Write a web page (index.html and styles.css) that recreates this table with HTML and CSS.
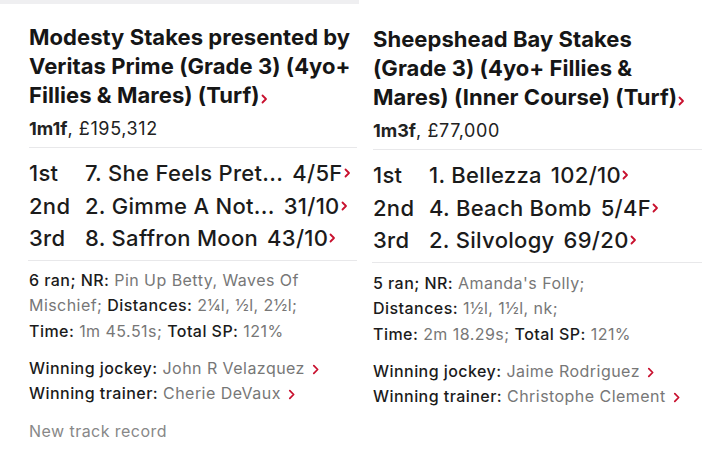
FILE: index.html
```html
<!DOCTYPE html>
<html lang="en">
<head>
<meta charset="utf-8">
<title>Results</title>
<link rel="stylesheet" href="styles.css">
</head>
<body>
<div class="cards">
  <section class="card card-left">
    <h2 class="title">Modesty Stakes presented by Veritas Prime (Grade 3) (4yo+ Fillies &amp; Mares) (Turf)<svg class="chev chev-title" viewBox="0 0 7 10"><path d="M1.5 1.5 L5 5 L1.5 8.5"/></svg></h2>
    <p class="meta"><b>1m1f</b>, £195,312</p>
    <div class="results">
      <div class="row"><span class="pos">1st</span><span class="runner"><span class="name">7. She Feels Pret...</span><span class="odds">4/5F</span><svg class="chev" viewBox="0 0 7 10"><path d="M1.5 1.5 L5 5 L1.5 8.5"/></svg></span></div>
      <div class="row"><span class="pos">2nd</span><span class="runner"><span class="name">2. Gimme A Not...</span><span class="odds">31/10</span><svg class="chev" viewBox="0 0 7 10"><path d="M1.5 1.5 L5 5 L1.5 8.5"/></svg></span></div>
      <div class="row"><span class="pos">3rd</span><span class="runner"><span class="name">8. Saffron Moon</span><span class="odds">43/10</span><svg class="chev" viewBox="0 0 7 10"><path d="M1.5 1.5 L5 5 L1.5 8.5"/></svg></span></div>
    </div>
    <div class="info">
      <p class="facts"><b>6 ran; NR:</b> Pin Up Betty, Waves Of Mischief; <span class="seg"><b>Distances:</b> 2¼l, ½l, 2½l;</span></p>
      <p class="facts"><b>Time:</b> 1m 45.51s; <b>Total SP:</b> 121%</p>
      <div class="people">
        <p><b>Winning jockey:</b> John R Velazquez <svg class="chev chev-link" viewBox="0 0 7 10"><path d="M1.5 1.5 L5 5 L1.5 8.5"/></svg></p>
        <p><b>Winning trainer:</b> Cherie DeVaux <svg class="chev chev-link" viewBox="0 0 7 10"><path d="M1.5 1.5 L5 5 L1.5 8.5"/></svg></p>
      </div>
      <p class="note">New track record</p>
    </div>
  </section>
  <section class="card card-right">
    <h2 class="title">Sheepshead Bay Stakes (Grade 3) (4yo+ Fillies &amp; Mares) (Inner Course) (Turf)<svg class="chev chev-title" viewBox="0 0 7 10"><path d="M1.5 1.5 L5 5 L1.5 8.5"/></svg></h2>
    <p class="meta"><b>1m3f</b>, £77,000</p>
    <div class="results">
      <div class="row"><span class="pos">1st</span><span class="runner"><span class="name">1. Bellezza</span><span class="odds">102/10</span><svg class="chev" viewBox="0 0 7 10"><path d="M1.5 1.5 L5 5 L1.5 8.5"/></svg></span></div>
      <div class="row"><span class="pos">2nd</span><span class="runner"><span class="name">4. Beach Bomb</span><span class="odds">5/4F</span><svg class="chev" viewBox="0 0 7 10"><path d="M1.5 1.5 L5 5 L1.5 8.5"/></svg></span></div>
      <div class="row"><span class="pos">3rd</span><span class="runner"><span class="name">2. Silvology</span><span class="odds">69/20</span><svg class="chev" viewBox="0 0 7 10"><path d="M1.5 1.5 L5 5 L1.5 8.5"/></svg></span></div>
    </div>
    <div class="info">
      <p class="facts"><b>5 ran; NR:</b> Amanda's Folly; <span class="seg"><b>Distances:</b> 1½l, 1½l, nk;</span></p>
      <p class="facts"><b>Time:</b> 2m 18.29s; <b>Total SP:</b> 121%</p>
      <div class="people">
        <p><b>Winning jockey:</b> Jaime Rodriguez <svg class="chev chev-link" viewBox="0 0 7 10"><path d="M1.5 1.5 L5 5 L1.5 8.5"/></svg></p>
        <p><b>Winning trainer:</b> Christophe Clement <svg class="chev chev-link" viewBox="0 0 7 10"><path d="M1.5 1.5 L5 5 L1.5 8.5"/></svg></p>
      </div>
    </div>
  </section>
</div>
</body>
</html>
```

FILE: styles.css
```css
* { box-sizing: border-box; }
html, body { margin: 0; padding: 0; background: #fff; }
body {
  font-family: Inter, "Liberation Sans", sans-serif;
  color: #1b1b1b;
  width: 717px;
  height: 452px;
  overflow: hidden;
}
.cards {
  display: grid;
  grid-template-columns: 359px 358px;
}
.card { display: flex; flex-direction: column; }
.card-left {
  border-top: 4px solid #efeff1;
  padding: 19px 2px 0 28px;
}
.card-right {
  padding: 25px 15px 0 13px;
}
.card-right .info { padding-top: 8px; }
.title {
  margin: 0 0 0 1px;
  font-size: 22px;
  line-height: 29px;
  font-weight: 700;
  letter-spacing: 0.05px;
  color: #161616;
}
.chev { width: 7px; height: 10px; fill: none; stroke: #c8102e; stroke-width: 1.8; stroke-linecap: round; stroke-linejoin: round; }
.chev-title { margin-left: 1px; vertical-align: -1px; }
.meta {
  margin: 6px 0 0 1px;
  font-size: 18px;
  line-height: 26px;
  font-weight: 400;
  letter-spacing: 0.6px;
  color: #222;
  padding-bottom: 5px;
  border-bottom: 1px solid #e8e8ea;
}
.meta b { font-weight: 700; letter-spacing: 0; }
.results {
  padding: 9px 0 5px 1px;
  border-bottom: 1px solid #e8e8ea;
}
.row {
  display: flex;
  font-size: 22px;
  line-height: 32.5px;
  font-weight: 500;
  letter-spacing: 0.3px;
  color: #1b1b1b;
}
.pos { width: 56px; flex-shrink: 0; }
.runner { display: flex; align-items: center; min-width: 0; }
.name { white-space: nowrap; overflow: hidden; text-overflow: ellipsis; min-width: 0; }
.odds { flex-shrink: 0; margin-left: 9px; }
.runner .chev { flex-shrink: 0; margin-left: 1px; }
.info {
  padding: 7px 0 0 1px;
  font-size: 16px;
  letter-spacing: 0.45px;
  color: #777;
}
.info b { color: #1b1b1b; font-weight: 500; }
.seg { white-space: nowrap; }
.facts { margin: 0; line-height: 25.5px; }
.people { margin-top: 12px; }
.people p { margin: 0; line-height: 25px; }
.chev-link { width: 8px; height: 11px; stroke-width: 1.6; vertical-align: -1px; margin-left: 2px; }
.note { margin: 13px 0 0; line-height: 25px; color: #888; }
```
